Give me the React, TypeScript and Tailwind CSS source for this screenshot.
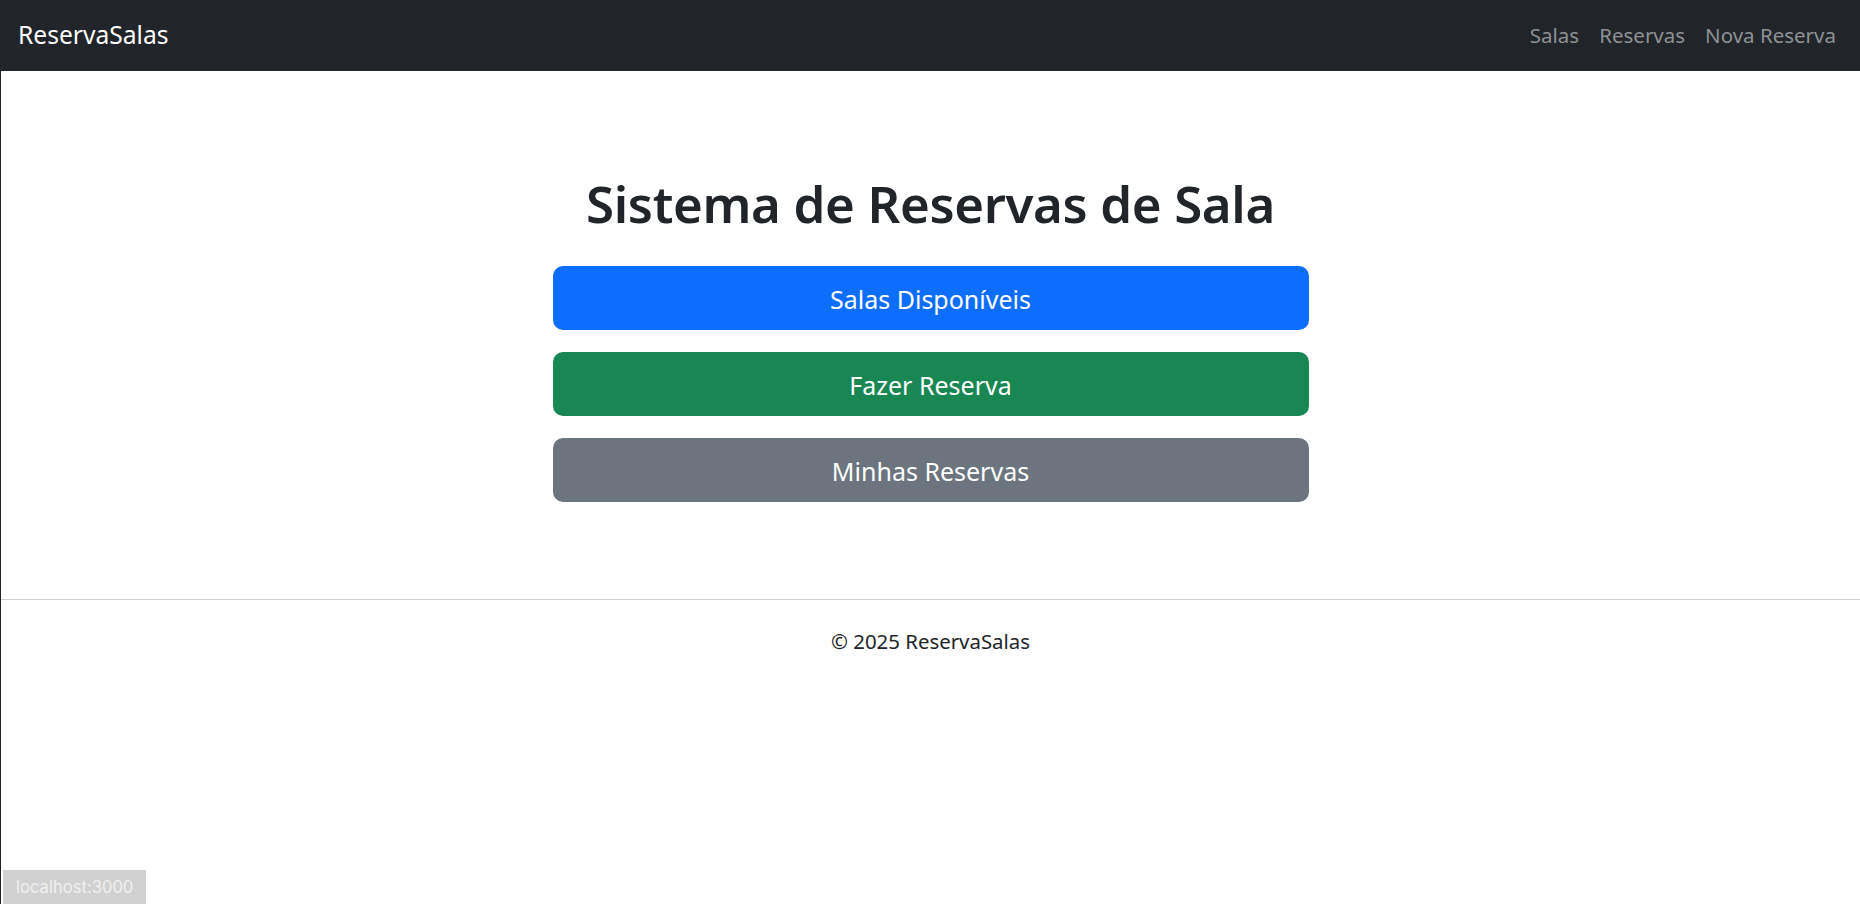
export default function App() {
  const font = { fontFamily: '"Noto Sans", "Open Sans", sans-serif' };
  return (
    <div className="min-h-[904px] bg-white relative" style={font}>
      <nav className="h-[71px] bg-[#212529] flex items-center justify-between pl-[18px] pr-[24px]">
        <span className="text-white text-[24.6px] leading-none">ReservaSalas</span>
        <div className="flex items-center gap-[20px] text-[20.5px] text-[#8f9194]">
          <span>Salas</span>
          <span>Reservas</span>
          <span>Nova Reserva</span>
        </div>
      </nav>
      <div className="border-l border-[#222] min-h-[833px]">
        <main className="flex flex-col items-center pt-[102px] pb-[97px]">
          <h1 className="text-[51px] leading-[60px] font-semibold text-[#212529] tracking-[-0.35px]">
            Sistema de Reservas de Sala
          </h1>
          <div className="w-[756px] mt-[33px] flex flex-col gap-[22px]">
            <div className="h-[64px] pt-[3px] rounded-[10px] bg-[#0d6efd] text-white text-[25px] flex items-center justify-center">
              Salas Disponíveis
            </div>
            <div className="h-[64px] pt-[3px] rounded-[10px] bg-[#198754] text-white text-[25px] flex items-center justify-center">
              Fazer Reserva
            </div>
            <div className="h-[64px] pt-[3px] rounded-[10px] bg-[#6c757d] text-white text-[25px] flex items-center justify-center">
              Minhas Reservas
            </div>
          </div>
        </main>
        <footer className="border-t border-[#cfcfcf] flex justify-center pt-[26px]">
          <span className="text-[20.4px] text-[#212529]">© 2025 ReservaSalas</span>
        </footer>
      </div>
      <div
        className="absolute left-[3px] bottom-0 h-[34px] px-[13px] bg-[#d1d1d1] text-[#f0f0f0] text-[16.6px] flex items-center"
        style={{ fontFamily: 'Inter, sans-serif' }}
      >
        localhost:3000
      </div>
    </div>
  );
}
